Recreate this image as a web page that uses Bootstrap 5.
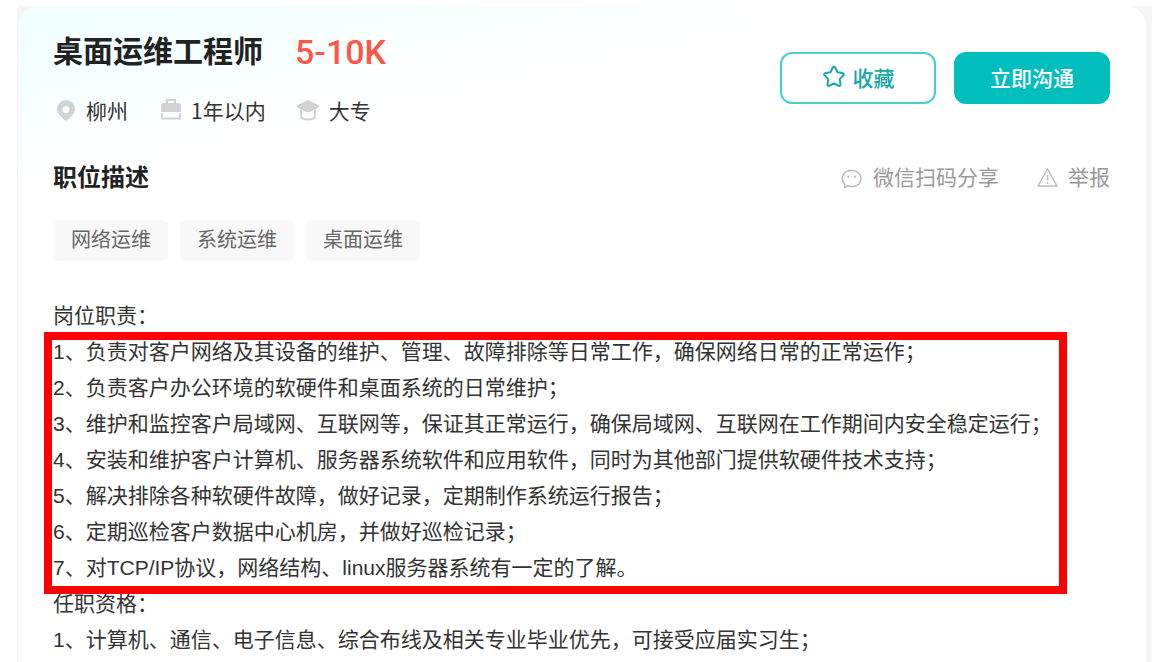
<!DOCTYPE html>
<html lang="zh-CN">
<head>
<meta charset="utf-8">
<meta name="viewport" content="width=device-width, initial-scale=1">
<title>桌面运维工程师</title>
<link href="https://cdn.jsdelivr.net/npm/bootstrap@5.3.0/dist/css/bootstrap.min.css" rel="stylesheet">
<style>
body{font-family:"Liberation Sans","Noto Sans CJK SC",sans-serif;font-size:21px;line-height:36px;color:#333;background:#fff}
.page-bg{margin:6px 20px 0 17px;padding:0 6px 0 1px;background:#f5f5f8;min-height:calc(100vh - 6px)}
.job-panel{min-height:calc(100vh - 6px);padding:26px 36px 0 35px;border-radius:20px 20px 0 0;background:linear-gradient(168deg,#effefe 0,#f4ffff 60px,#fff 180px)}
.job-name{font-size:30px;line-height:40px;font-weight:700;color:#222}
.job-pay{font-family:Roboto,sans-serif;font-size:34px;line-height:40px;font-weight:500;color:#fe574a}
.job-meta{gap:31px;margin-top:20px}
.meta-item{gap:8px}
.meta-item svg{color:#d2d2d2}
.job-meta,.cjk{font-family:"Noto Sans CJK SC",sans-serif}
.job-actions{gap:18px;margin-top:20px}
.job-actions .btn{width:156px;height:52px;padding:0 0 2px;border:2px solid #00bebd;border-radius:12px;font-size:21px;font-weight:500;line-height:36px}
.btn-save{color:#14a8a8;background:#fff;border-color:#45cfce!important;gap:7px}
.btn-chat{color:#fff;background:#00bebd}
.btn-save:hover{color:#00a6a7;background:#f2ffff}
.btn-chat:hover{color:#fff;background:#00a6a7}
.section-head{margin-top:32px}
.section-title{font-size:24px;line-height:36px;font-weight:700;color:#222}
.side-links{gap:38px}
.side-links a{color:#999;gap:10px}
.side-links svg{color:#bbb}
.tag-list{gap:12px;margin-top:24px;padding-left:1px}
.tag-item{padding:0 17px;font-size:20px;line-height:41px;color:#666;background:#f8f8f8;border-radius:5px}
.job-text{margin-top:37px}
.marked-frame{inset:-2px 43px -8px -9px;border:8px solid #f00;pointer-events:none}
</style>
</head>
<body>
<div class="page-bg">
<main class="job-panel">
  <header class="d-flex justify-content-between">
    <div>
      <div class="d-flex align-items-center">
        <h1 class="job-name m-0">桌面运维工程师</h1>
        <span class="job-pay ms-4 ps-2">5-10K</span>
      </div>
      <div class="job-meta d-flex">
        <span class="meta-item d-flex align-items-center">
          <svg width="25" height="24" viewBox="0 0 25 24" aria-hidden="true"><path fill="currentColor" fill-rule="evenodd" d="M13 2a9 9 0 0 1 9 9c0 4-3 7-9 12C7 18 4 15 4 11a9 9 0 0 1 9-9Zm0 6a3.500 3.500 0 1 0 0 7 3.500 3.500 0 0 0 0-7Z"/></svg>柳州</span>
        <span class="meta-item d-flex align-items-center">
          <svg width="24" height="24" viewBox="0 0 24 24" aria-hidden="true"><path fill="none" stroke="currentColor" stroke-width="2" d="M8 6V2h8v4"/><path fill="currentColor" d="M4 5h16a2 2 0 0 1 2 2v7H2V7a2 2 0 0 1 2-2Z"/><path fill="none" stroke="currentColor" stroke-width="2" d="M3 15v5.500h18V15"/></svg>1年以内</span>
        <span class="meta-item d-flex align-items-center">
          <svg width="24" height="24" viewBox="0 0 24 24" aria-hidden="true"><path fill="currentColor" d="M9.500 2.500Q11 1.500 12.500 2.500L21 7q2 1.500 0 3l-8.500 4q-1.500.8-3 0L1 10Q-1 8.500 1 7Z"/><path fill="none" stroke="currentColor" stroke-width="2" d="M4 12v6q0 3.500 7 3.500t7-3.500v-6"/></svg>大专</span>
      </div>
    </div>
    <div class="job-actions d-flex align-items-start cjk">
      <button type="button" class="btn btn-save d-flex align-items-center justify-content-center">
        <svg width="24" height="24" viewBox="0 0 24 24" fill="none" stroke="currentColor" stroke-width="2" stroke-linejoin="round" aria-hidden="true"><path d="M10.700 2.800Q12 .8 13.300 2.800l2.200 4.500 5 .8q2.300.6.8 2.300l-3.600 3.700.8 5.100q0 2.300-2 1.500L12 18.500l-4.500 2.200q-2 .8-2-1.500l.8-5.100-3.600-3.700Q1.200 8.700 3.500 8.100l5-.8Z"/></svg>收藏</button>
      <button type="button" class="btn btn-chat">立即沟通</button>
    </div>
  </header>

  <div class="section-head d-flex justify-content-between align-items-center">
    <h2 class="section-title m-0">职位描述</h2>
    <div class="side-links d-flex">
      <a href="#" class="d-flex align-items-center text-decoration-none">
        <svg width="22" height="22" viewBox="0 0 22 22" fill="none" stroke="currentColor" stroke-width="1.500" stroke-linejoin="round" aria-hidden="true"><path d="M4 17.500C-1.500 12 1.500 3.500 11 3.500c12 0 12 16 0 16-1.500 0-2.500-.2-3.700-.7L3.500 20.500Z"/><path stroke-linecap="round" stroke-width="2" d="M7.500 9.500v.5m6.500-.5v.5"/></svg>微信扫码分享</a>
      <a href="#" class="d-flex align-items-center text-decoration-none">
        <svg width="21" height="22" viewBox="0 0 21 22" fill="none" stroke="currentColor" stroke-width="1.500" stroke-linejoin="round" aria-hidden="true"><path d="M10.500 2 20 19H1Z"/><path d="M10.500 8v5.500m0 1.500v2"/></svg>举报</a>
    </div>
  </div>

  <ul class="tag-list list-unstyled d-flex mb-0">
    <li class="tag-item">网络运维</li>
    <li class="tag-item">系统运维</li>
    <li class="tag-item">桌面运维</li>
  </ul>

  <section class="job-text">
    <div>岗位职责：</div>
    <div class="position-relative">
      <div>1、负责对客户网络及其设备的维护、管理、故障排除等日常工作，确保网络日常的正常运作；</div>
      <div>2、负责客户办公环境的软硬件和桌面系统的日常维护；</div>
      <div>3、维护和监控客户局域网、互联网等，保证其正常运行，确保局域网、互联网在工作期间内安全稳定运行；</div>
      <div>4、安装和维护客户计算机、服务器系统软件和应用软件，同时为其他部门提供软硬件技术支持；</div>
      <div>5、解决排除各种软硬件故障，做好记录，定期制作系统运行报告；</div>
      <div>6、定期巡检客户数据中心机房，并做好巡检记录；</div>
      <div>7、对TCP/IP协议，网络结构、linux服务器系统有一定的了解。</div>
      <div class="marked-frame position-absolute"></div>
    </div>
    <div>任职资格：</div>
    <div>1、计算机、通信、电子信息、综合布线及相关专业毕业优先，可接受应届实习生；</div>
  </section>
</main>
</div>
<script src="https://cdn.jsdelivr.net/npm/bootstrap@5.3.0/dist/js/bootstrap.bundle.min.js"></script>
</body>
</html>
